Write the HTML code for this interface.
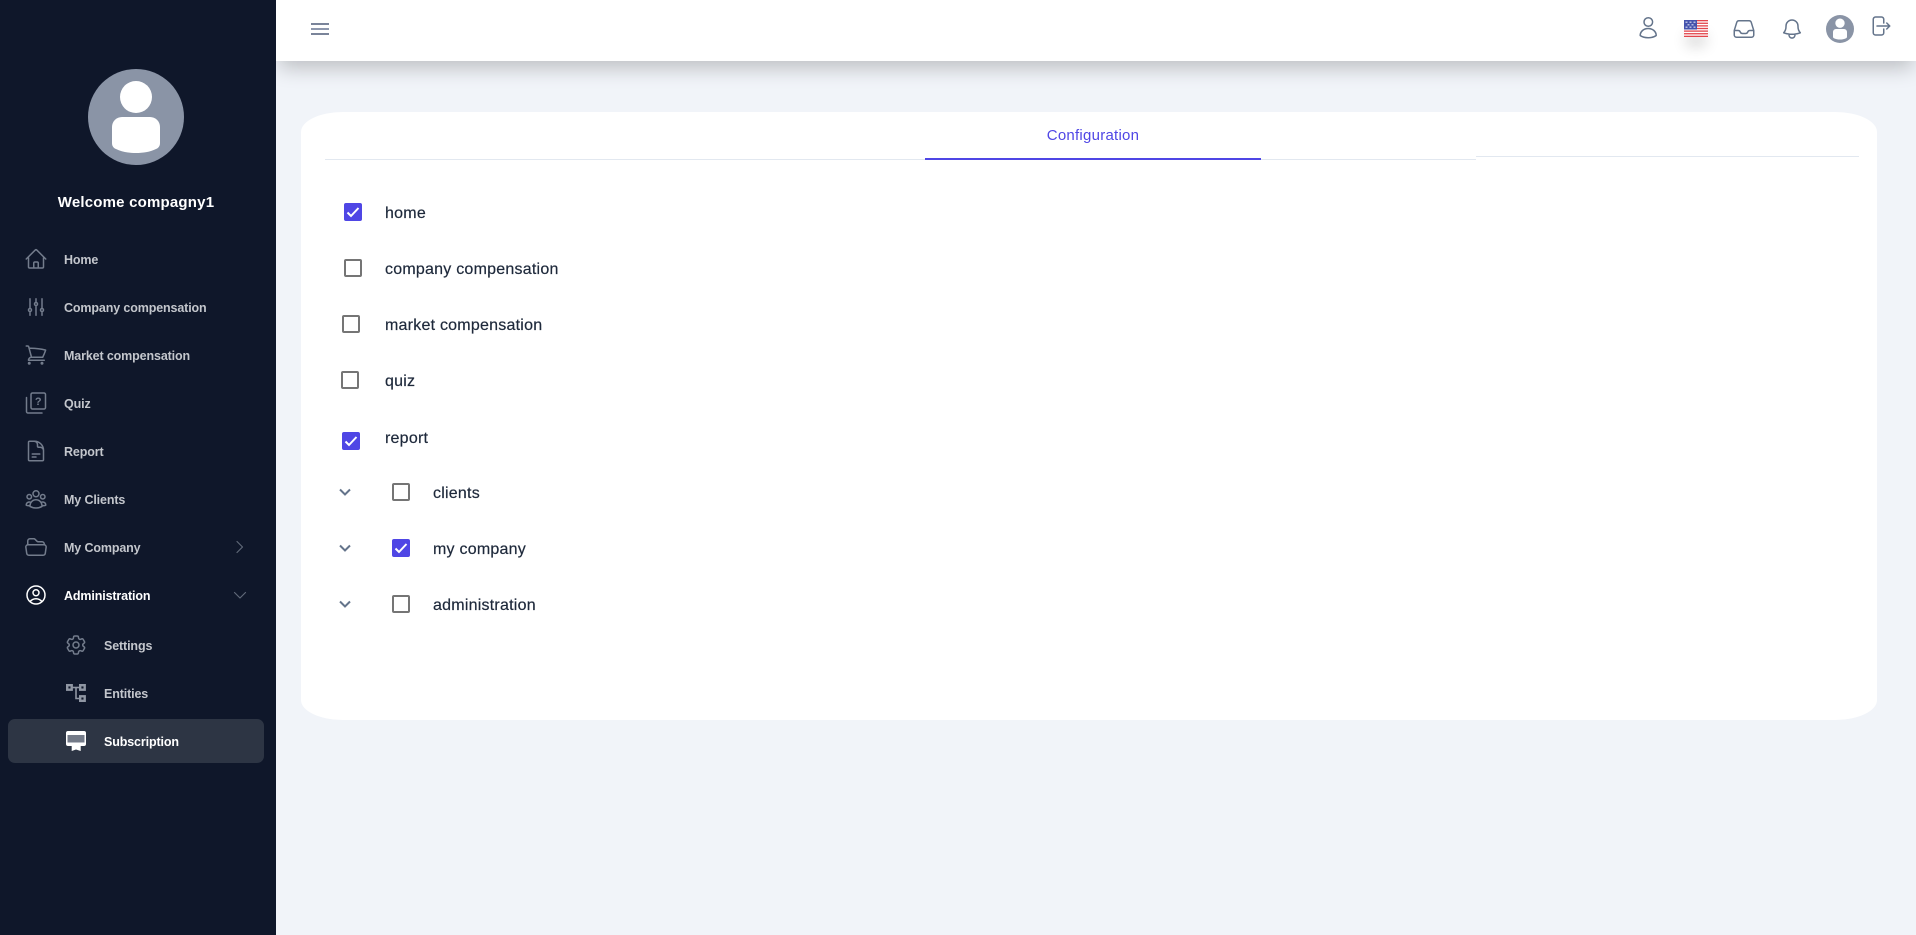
<!DOCTYPE html>
<html><head><meta charset="utf-8"><style>
html,body{margin:0;padding:0;width:1916px;height:935px;overflow:hidden;background:#f1f4f9;font-family:"Liberation Sans",sans-serif}
.a{position:absolute}
.t{position:absolute;white-space:nowrap;line-height:20px}
.n{font-size:12.5px;font-weight:700;color:#c3c6cc;letter-spacing:-.13px}
.l{font-size:16px;color:#1e293b;letter-spacing:.23px;-webkit-text-stroke:.2px #1e293b}
svg{position:absolute;overflow:visible}
.i{fill:none;stroke:#737c8c;stroke-width:1.5;stroke-linecap:round;stroke-linejoin:round}
.tp{fill:none;stroke:#64748b;stroke-width:1.5;stroke-linecap:round;stroke-linejoin:round}
.cb{position:absolute;width:14px;height:14px;border:2px solid #757575;border-radius:2px;background:#fff}
.ck{position:absolute;width:18px;height:18px;border-radius:2px;background:#4f46e5}
.ck svg{left:0;top:0}
</style></head><body>
<div class="a" style="left:276px;top:0;width:1640px;height:61px;background:#fff;box-shadow:0 10px 20px -3px rgba(0,0,0,.22);z-index:2"></div>
<div class="a" style="left:0;top:0;width:276px;height:935px;background:#0f172a;z-index:3">
<svg style="left:88px;top:69px" width="96" height="96" viewBox="0 0 96 96"><circle cx="48" cy="48" r="48" fill="#8a94a6"/><circle cx="48" cy="28" r="16" fill="#fff"/><path d="M24 58a10 10 0 0 1 10-10h28a10 10 0 0 1 10 10v16c0 3-1.500 5-4 6-6 3-13 4-20 4s-14-1-20-4c-2.500-1-4-3-4-6z" fill="#fff"/></svg>
<div class="t" style="left:0;width:272px;text-align:center;top:193px;font-size:15px;font-weight:700;color:#fff;letter-spacing:.2px">Welcome compagny1</div>

<svg class="i" style="left:24px;top:247px" width="24" height="24" viewBox="0 0 24 24"><path d="M2.25 12l8.954-8.955c.44-.439 1.152-.439 1.591 0L21.75 12M4.5 9.75v10.125c0 .621.504 1.125 1.125 1.125H9.75v-4.875c0-.621.504-1.125 1.125-1.125h2.25c.621 0 1.125.504 1.125 1.125V21h4.125c.621 0 1.125-.504 1.125-1.125V9.75M8.25 21h8.25"/></svg>
<div class="t n" style="left:64px;top:250px">Home</div>
<svg class="i" style="left:24px;top:295px" width="24" height="24" viewBox="0 0 24 24"><path d="M6 13.5V3.75m0 9.75a1.5 1.5 0 010 3m0-3a1.5 1.5 0 000 3m0 3.75V16.5m12-3V3.75m0 9.75a1.5 1.5 0 010 3m0-3a1.5 1.5 0 000 3m0 3.75V16.5m-6-9V3.75m0 3.75a1.5 1.5 0 010 3m0-3a1.5 1.5 0 000 3m0 9.75V10.5"/></svg>
<div class="t n" style="left:64px;top:297.500px">Company compensation</div>
<svg class="i" style="left:24px;top:343px" width="24" height="24" viewBox="0 0 24 24"><path d="M2.25 3h1.386c.51 0 .955.343 1.087.835l.383 1.437M7.5 14.25a3 3 0 00-3 3h15.75m-12.75-3h11.218c1.121-2.3 2.1-4.684 2.924-7.138a60.114 60.114 0 00-16.536-1.84M7.5 14.25L5.106 5.272M6 20.25a.75.75 0 11-1.5 0 .75.75 0 011.5 0zm12.75 0a.75.75 0 11-1.5 0 .75.75 0 011.5 0z"/></svg>
<div class="t n" style="left:64px;top:346px">Market compensation</div>
<svg class="i" style="left:24px;top:391px" width="24" height="24" viewBox="0 0 24 24"><path d="M8.5 2h11.5a1.5 1.5 0 0 1 1.5 1.5v13a1.5 1.5 0 0 1-1.5 1.5H8.5a1.5 1.5 0 0 1-1.5-1.5v-13a1.5 1.5 0 0 1 1.5-1.5zM2.5 6.5v14a1.5 1.5 0 0 0 1.5 1.5h14"/><text x="14.2" y="14" font-size="11" font-weight="700" fill="#737c8c" stroke="none" text-anchor="middle" font-family="Liberation Sans">?</text></svg>
<div class="t n" style="left:64px;top:394px">Quiz</div>
<svg class="i" style="left:24px;top:439px" width="24" height="24" viewBox="0 0 24 24"><path d="M19.5 14.25v-2.625a3.375 3.375 0 00-3.375-3.375h-1.5A1.125 1.125 0 0113.5 7.125v-1.5a3.375 3.375 0 00-3.375-3.375H8.25m0 12.75h7.5m-7.5 3H12M10.5 2.25H5.625c-.621 0-1.125.504-1.125 1.125v17.25c0 .621.504 1.125 1.125 1.125h12.75c.621 0 1.125-.504 1.125-1.125V11.25a9 9 0 00-9-9z"/></svg>
<div class="t n" style="left:64px;top:441.500px">Report</div>
<svg class="i" style="left:24px;top:487px" width="24" height="24" viewBox="0 0 24 24"><path d="M18 18.72a9.094 9.094 0 003.741-.479 3 3 0 00-4.682-2.72m.94 3.198l.001.031c0 .225-.012.447-.037.666A11.944 11.944 0 0112 21c-2.17 0-4.207-.576-5.963-1.584A6.062 6.062 0 016 18.719m12 0a5.971 5.971 0 00-.941-3.197m0 0A5.995 5.995 0 0012 12.75a5.995 5.995 0 00-5.058 2.772m0 0a3 3 0 00-4.681 2.72 8.986 8.986 0 003.74.477m.94-3.197a5.971 5.971 0 00-.94 3.197M15 6.75a3 3 0 11-6 0 3 3 0 016 0zm6 3a2.25 2.25 0 11-4.5 0 2.25 2.25 0 014.5 0zm-13.5 0a2.25 2.25 0 11-4.5 0 2.25 2.25 0 014.5 0z"/></svg>
<div class="t n" style="left:64px;top:489.500px">My Clients</div>
<svg class="i" style="left:24px;top:535px" width="24" height="24" viewBox="0 0 24 24"><path d="M3.75 9.776c.112-.017.227-.026.344-.026h15.812c.117 0 .232.009.344.026m-16.5 0a2.25 2.25 0 00-1.883 2.542l.857 6a2.25 2.25 0 002.227 1.932H19.05a2.25 2.25 0 002.227-1.932l.857-6a2.25 2.25 0 00-1.883-2.542m-16.5 0V6A2.25 2.25 0 016 3.75h3.879a1.5 1.5 0 011.06.44l2.122 2.12a1.5 1.5 0 001.06.44H18A2.25 2.25 0 0120.25 9v.776"/></svg>
<div class="t n" style="left:64px;top:537.500px">My Company</div>
<svg class="i" style="left:234px;top:541px;stroke:#5f6878;stroke-width:1.2" width="12" height="12" viewBox="0 0 12 12"><path d="M3 .5l5.500 5.500L3 11.500"/></svg>
<svg class="i" style="left:24px;top:583px;stroke:#fff" width="24" height="24" viewBox="0 0 24 24"><path d="M17.982 18.725A7.488 7.488 0 0012 15.75a7.488 7.488 0 00-5.982 2.975m11.963 0a9 9 0 10-11.963 0m11.963 0A8.966 8.966 0 0112 21a8.966 8.966 0 01-5.982-2.275M15 9.750a3 3 0 11-6 0 3 3 0 016 0z"/></svg>
<div class="t n" style="left:64px;top:585.500px;color:#fff">Administration</div>
<svg class="i" style="left:234px;top:589px;stroke:#5f6878;stroke-width:1.2" width="12" height="12" viewBox="0 0 12 12"><path d="M.500 3.500L6 9l5.500-5.500"/></svg>

<svg class="i" style="left:64px;top:633px" width="24" height="24" viewBox="0 0 24 24"><path d="M9.594 3.94c.09-.542.56-.94 1.11-.94h2.593c.55 0 1.02.398 1.11.94l.213 1.281c.063.374.313.686.645.87.074.04.147.083.22.127.324.196.72.257 1.075.124l1.217-.456a1.125 1.125 0 011.37.49l1.296 2.247a1.125 1.125 0 01-.26 1.431l-1.003.827c-.293.24-.438.613-.431.992a6.759 6.759 0 010 .255c-.007.378.138.75.43.99l1.005.828c.424.35.534.954.26 1.43l-1.298 2.247a1.125 1.125 0 01-1.369.491l-1.217-.456c-.355-.133-.75-.072-1.076.124a6.57 6.57 0 01-.22.128c-.331.183-.581.495-.644.869l-.213 1.28c-.09.543-.56.941-1.11.941h-2.594c-.55 0-1.02-.398-1.11-.94l-.213-1.281c-.062-.374-.312-.686-.644-.87a6.52 6.52 0 01-.22-.127c-.325-.196-.72-.257-1.076-.124l-1.217.456a1.125 1.125 0 01-1.369-.49l-1.297-2.247a1.125 1.125 0 01.26-1.431l1.004-.827c.292-.24.437-.613.43-.992a6.932 6.932 0 010-.255c.007-.378-.138-.75-.43-.99l-1.004-.828a1.125 1.125 0 01-.26-1.43l1.297-2.247a1.125 1.125 0 011.37-.491l1.216.456c.356.133.751.072 1.076-.124.072-.044.146-.087.22-.128.332-.183.582-.495.644-.869l.214-1.281z"/><path d="M15 12a3 3 0 11-6 0 3 3 0 016 0z"/></svg>
<div class="t n" style="left:104px;top:636px">Settings</div>
<svg style="left:66px;top:684px" width="20" height="18" viewBox="0 0 20 18" fill="none" stroke="#8f96a3" stroke-width="2.4"><rect x="1.200" y="1.200" width="4.500" height="4.500"/><rect x="14.200" y="1.200" width="4.500" height="4.500"/><rect x="14.200" y="12.300" width="4.500" height="4.500"/><path d="M6 3.500h8" stroke-width="1.600"/><path d="M10 3.500v11h4" stroke-width="1.600"/></svg>
<div class="t n" style="left:104px;top:683.500px">Entities</div>
<div class="a" style="left:8px;top:719px;width:256px;height:44px;border-radius:7px;background:#2d3544"></div>
<svg style="left:66px;top:731px" width="20" height="20" viewBox="0 0 20 20"><path d="M2 0h16a2 2 0 0 1 2 2v11a2 2 0 0 1-2 2H14.700v5L10 18.500 5.700 20v-5H2a2 2 0 0 1-2-2V2a2 2 0 0 1 2-2z" fill="#fff"/><rect x="1.500" y="4" width="17" height="7.500" fill="#737a88"/></svg>
<div class="t n" style="left:104px;top:731.500px;color:#fff">Subscription</div>
</div>

<!-- top bar icons -->
<div style="z-index:4" class="a">
<div class="a" style="left:311px;top:23px;width:18px;height:2px;background:#7a849a"></div>
<div class="a" style="left:311px;top:28px;width:18px;height:2px;background:#8d97ad"></div>
<div class="a" style="left:311px;top:33px;width:18px;height:2px;background:#7a849a"></div>
<svg class="tp" style="left:1638px;top:15px" width="20" height="24" viewBox="0 0 20 24"><circle cx="10.300" cy="7" r="4.300"/><path d="M2.200 20.500c0-4 3.500-7 8-7s8 3 8 7c-2 1.600-5 2.200-8 2.200s-6-.6-8-2.200z"/></svg>
<div class="a" style="left:1688px;top:28px;width:16px;height:8px;box-shadow:0 8px 14px 2px rgba(0,0,0,.16)"></div>
<svg style="left:1684px;top:20px" width="24" height="17" viewBox="0 0 24 17"><rect width="24" height="17" fill="#fff"/><g fill="#e2454c"><rect y="0" width="24" height="1.310"/><rect y="2.620" width="24" height="1.310"/><rect y="5.230" width="24" height="1.310"/><rect y="7.850" width="24" height="1.310"/><rect y="10.460" width="24" height="1.310"/><rect y="13.080" width="24" height="1.310"/><rect y="15.690" width="24" height="1.310"/></g><rect width="13" height="9.500" fill="#4553ad"/><g fill="#b5bce0"><rect x="1.500" y="1.500" width="2" height="1.500"/><rect x="5.500" y="1.500" width="2" height="1.500"/><rect x="9.500" y="1.500" width="2" height="1.500"/><rect x="3.500" y="4" width="2" height="1.500"/><rect x="7.500" y="4" width="2" height="1.500"/><rect x="1.500" y="6.500" width="2" height="1.500"/><rect x="5.500" y="6.500" width="2" height="1.500"/><rect x="9.500" y="6.500" width="2" height="1.500"/></g></svg>
<svg class="tp" style="left:1732px;top:17px" width="24" height="24" viewBox="0 0 24 24"><path d="M2.250 13.500h3.860a2.250 2.250 0 012.012 1.244l.256.512a2.250 2.250 0 002.013 1.244h3.218a2.250 2.250 0 002.013-1.244l.256-.512a2.250 2.250 0 012.013-1.244h3.859m-19.500.338V18a2.250 2.250 0 002.250 2.250h15A2.250 2.250 0 0021.750 18v-4.162c0-.224-.034-.447-.1-.661L19.240 5.338a2.250 2.250 0 00-2.150-1.588H6.911a2.250 2.250 0 00-2.150 1.588L2.350 13.177a2.250 2.250 0 00-.1.661z"/></svg>
<svg class="tp" style="left:1780px;top:17px" width="24" height="24" viewBox="0 0 24 24"><path d="M14.857 17.082a23.848 23.848 0 005.454-1.310A8.967 8.967 0 0118 9.750v-.7V9A6 6 0 006 9v.75a8.967 8.967 0 01-2.312 6.022c1.733.64 3.560 1.085 5.455 1.310m5.714 0a24.255 24.255 0 01-5.714 0m5.714 0a3 3 0 11-5.714 0"/></svg>
<svg style="left:1826px;top:15px" width="28" height="28" viewBox="0 0 96 96"><circle cx="48" cy="48" r="48" fill="#8a94a6"/><circle cx="48" cy="28" r="16" fill="#fff"/><path d="M24 58a10 10 0 0 1 10-10h28a10 10 0 0 1 10 10v16c0 3-1.500 5-4 6-6 3-13 4-20 4s-14-1-20-4c-2.500-1-4-3-4-6z" fill="#fff"/></svg>
<svg class="tp" style="left:1868px;top:14px" width="24" height="24" viewBox="0 0 24 24"><path d="M15.750 9V5.250A2.250 2.250 0 0013.500 3h-6a2.250 2.250 0 00-2.250 2.250v13.500A2.250 2.250 0 007.500 21h6a2.250 2.250 0 002.250-2.250V15m3 0l3-3m0 0l-3-3m3 3H9"/></svg>
</div>

<!-- card -->
<div class="a" style="left:301px;top:112px;width:1576px;height:608px;background:#fff;border-radius:42px/20px"></div>
<div class="a" style="left:325px;top:159px;width:1151px;height:1px;background:#e2e8f0"></div>
<div class="a" style="left:1476px;top:156px;width:383px;height:1px;background:#e2e8f0"></div>
<div class="a" style="left:925px;top:158px;width:336px;height:2px;background:#4f46e5"></div>
<div class="t" style="left:925px;width:336px;text-align:center;top:126px;font-size:15px;color:#4f46e5;letter-spacing:.25px">Configuration</div>

<div class="ck" style="left:344px;top:203px"><svg width="18" height="18" viewBox="0 0 18 18" fill="none" stroke="#fff" stroke-width="2"><path d="M3.500 9.500l3.500 3.500 7.500-8"/></svg></div>
<div class="t l" style="left:385px;top:204px">home</div>
<div class="cb" style="left:344px;top:259px"></div>
<div class="t l" style="left:385px;top:260px">company compensation</div>
<div class="cb" style="left:342px;top:315px"></div>
<div class="t l" style="left:385px;top:316px">market compensation</div>
<div class="cb" style="left:341px;top:371px"></div>
<div class="t l" style="left:385px;top:372px">quiz</div>
<div class="ck" style="left:342px;top:432px"><svg width="18" height="18" viewBox="0 0 18 18" fill="none" stroke="#fff" stroke-width="2"><path d="M3.500 9.500l3.500 3.500 7.500-8"/></svg></div>
<div class="t l" style="left:385px;top:428.500px">report</div>

<svg style="left:339px;top:488px" width="12" height="8" viewBox="0 0 12 8" fill="none" stroke="#64748b" stroke-width="2"><path d="M1 1.500l5 5 5-5"/></svg>
<div class="cb" style="left:392px;top:483px"></div>
<div class="t l" style="left:433px;top:484px">clients</div>
<svg style="left:339px;top:544px" width="12" height="8" viewBox="0 0 12 8" fill="none" stroke="#64748b" stroke-width="2"><path d="M1 1.500l5 5 5-5"/></svg>
<div class="ck" style="left:392px;top:539px"><svg width="18" height="18" viewBox="0 0 18 18" fill="none" stroke="#fff" stroke-width="2"><path d="M3.500 9.500l3.500 3.500 7.500-8"/></svg></div>
<div class="t l" style="left:433px;top:540px">my company</div>
<svg style="left:339px;top:600px" width="12" height="8" viewBox="0 0 12 8" fill="none" stroke="#64748b" stroke-width="2"><path d="M1 1.500l5 5 5-5"/></svg>
<div class="cb" style="left:392px;top:595px"></div>
<div class="t l" style="left:433px;top:596px">administration</div>
</body></html>
